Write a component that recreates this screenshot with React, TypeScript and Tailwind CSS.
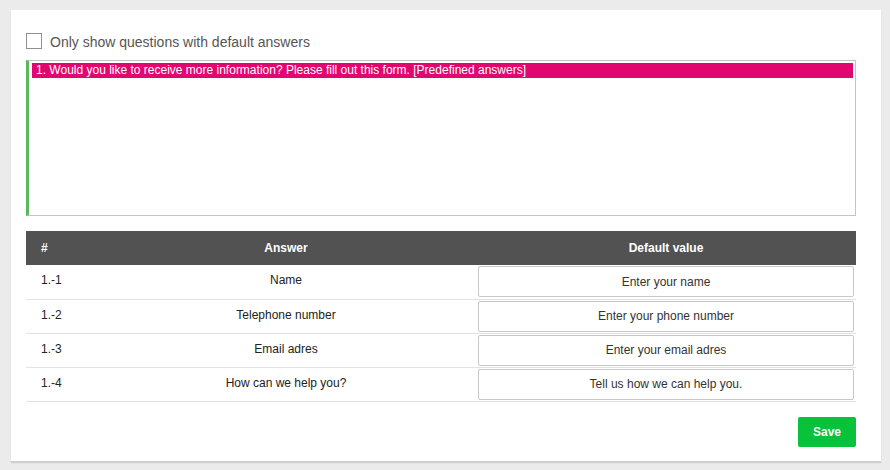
const rows = [
  { id: '1.-1', answer: 'Name', value: 'Enter your name' },
  { id: '1.-2', answer: 'Telephone number', value: 'Enter your phone number' },
  { id: '1.-3', answer: 'Email adres', value: 'Enter your email adres' },
  { id: '1.-4', answer: 'How can we help you?', value: 'Tell us how we can help you.' },
]

export default function App() {
  return (
    <div
      className="min-h-[470px] w-[890px] bg-[#ebebeb] pt-[10px] pl-[11px]"
      style={{ fontFamily: '"Liberation Sans", Arial, sans-serif' }}
    >
      <div className="w-[870px] h-[451px] bg-white shadow-[0_2px_1px_rgba(0,0,0,0.12)] px-[15px] pt-[23px]">
        {/* Filter checkbox */}
        <label className="flex items-center h-4 gap-2">
          <span className="w-4 h-4 border border-[#8f8f8f] bg-white shrink-0" />
          <span className="text-[14px] text-[#555] leading-none pt-[2px]">Only show questions with default answers</span>
        </label>

        {/* Question list */}
        <div className="mt-[11px] w-[830px] h-[156px] border border-[#c4c4c4] border-l-[3px] border-l-[#5cb85c] pt-[2px] pl-[3px] pr-[2px]">
          <div className="h-[15px] bg-[#e1076e] text-white text-[12px] leading-[15px] pl-1">
            1. Would you like to receive more information? Please fill out this form. [Predefined answers]
          </div>
        </div>

        {/* Answers table */}
        <table className="mt-[15px] w-[830px] border-collapse text-[12px]">
          <thead>
            <tr className="h-[34px] bg-[#525252] text-white font-bold">
              <th className="w-[70px] text-left pl-[15px]">#</th>
              <th className="w-[380px] text-center">Answer</th>
              <th className="text-center">Default value</th>
            </tr>
          </thead>
          <tbody>
            {rows.map((r) => (
              <tr key={r.id} className="h-[34px] border-b border-[#e2e2e2] text-[#222]">
                <td className="pl-[15px] pb-[3px]">{r.id}</td>
                <td className="text-center pb-[3px]">{r.answer}</td>
                <td className="px-[2px] py-[1px]">
                  <div className="h-[31px] flex items-center justify-center border border-[#c8c8c8] rounded-[2px] text-[#333]">
                    {r.value}
                  </div>
                </td>
              </tr>
            ))}
          </tbody>
        </table>

        <div className="flex justify-end w-[830px] mt-[15px]">
          <button className="w-[58px] h-[30px] bg-[#07c23a] rounded-[2px] text-white text-[12px] font-bold">
            Save
          </button>
        </div>
      </div>
    </div>
  )
}
